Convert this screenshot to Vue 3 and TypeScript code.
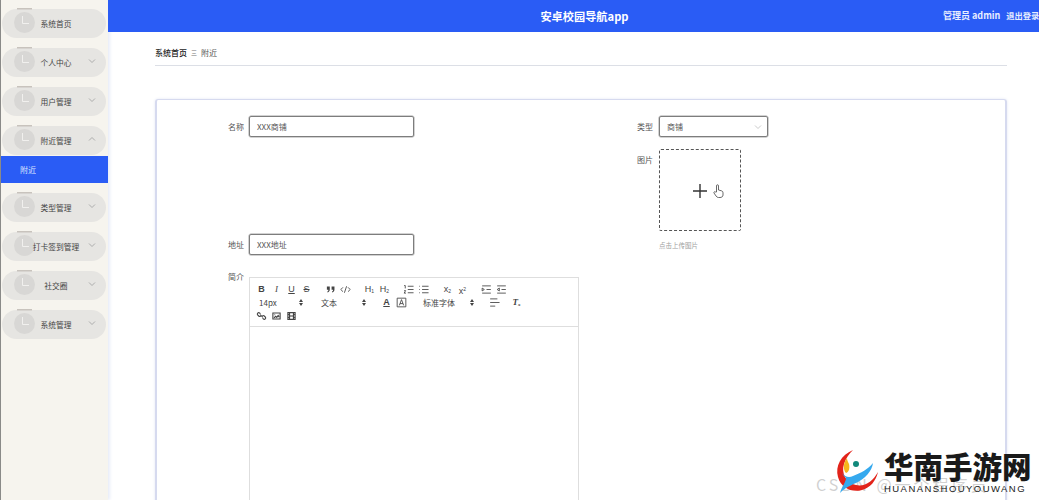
<script setup lang="ts">
interface MenuItem {
  name: string;
  arrow?: "up" | "down";
  children?: string[];
}

interface ToolItem {
  icon?: string;
  text?: string;
  sub?: string;
  kind?: string;
}

const menu: MenuItem[] = [
  { name: "系统首页" },
  { name: "个人中心", arrow: "down" },
  { name: "用户管理", arrow: "down" },
  { name: "附近管理", arrow: "up", children: ["附近"] },
  { name: "类型管理", arrow: "down" },
  { name: "打卡签到管理", arrow: "down" },
  { name: "社交圈", arrow: "down" },
  { name: "系统管理", arrow: "down" },
];

const icons: Record<string, string[]> = {
  quote: ["M4 5h4v4c0 2-1 3.500-3 4l-.5-1c1-.4 1.500-1 1.600-2.500H4z", "M10.500 5h4v4c0 2-1 3.500-3 4l-.5-1c1-.4 1.500-1 1.600-2.500h-2.100z"],
  code: ["M5.500 6 2.500 9l3 3", "M12.500 6l3 3-3 3", "M10.500 4.500l-3 9"],
  ol: ["M8 4.500h8", "M8 9h8", "M8 13.500h8", "M3 3.500h1.500v4", "M3 10.500h2L3 14h2.500"],
  ul: ["M7 4.500h9", "M7 9h9", "M7 13.500h9", "M3 4.500h1", "M3 9h1", "M3 13.500h1"],
  indent: ["M3 4h12", "M3 14h12", "M9 9h6", "M3 7l3 2-3 2z"],
  outdent: ["M3 4h12", "M3 14h12", "M9 9h6", "M6 7 3 9l3 2z"],
  background: ["M3 3h12v12H3z", "M6 13l3-8 3 8", "M7 10.500h4"],
  align: ["M3 4h10", "M3 9h13", "M3 14h7"],
  link: ["M7 5 5.500 3.500a2.500 2.500 0 0 0-3.500 3.500L4 9a2.500 2.500 0 0 0 3.500 0", "M11 13l1.500 1.500a2.500 2.500 0 0 0 3.500-3.500L14 9a2.500 2.500 0 0 0-3.500 0", "M6.500 6.500l5 5"],
  image: ["M2.500 3.500h13v11h-13z", "M4.500 12.500l3-3 2 2 2.500-3.500 2 3", "M5.500 6.500h1"],
  video: ["M2.500 3h13v12h-13z", "M5.500 3v12", "M12.500 3v12", "M5.500 9h7", "M2.500 6.500h3", "M2.500 11.500h3", "M12.500 6.500h3", "M12.500 11.500h3"],
};

const firstRow: ToolItem[][] = [
  [
    { text: "B", kind: "bold" },
    { text: "I", kind: "italic" },
    { text: "U", kind: "under" },
    { text: "S", kind: "strike" },
  ],
  [{ icon: "quote" }, { icon: "code" }],
  [
    { text: "H", sub: "1", kind: "head" },
    { text: "H", sub: "2", kind: "head" },
  ],
  [{ icon: "ol" }, { icon: "ul" }],
  [
    { text: "x", sub: "2", kind: "script" },
    { text: "x", sub: "2", kind: "super" },
  ],
  [{ icon: "indent" }, { icon: "outdent" }],
];

const lastRow: ToolItem[] = [{ icon: "link" }, { icon: "image" }, { icon: "video" }];
</script>

<template>
  <div class="page">
    <aside class="side">
      <template v-for="item in menu" :key="item.name">
        <div class="pill">
          <svg class="clock" width="22" height="26" viewBox="0 0 22 26">
            <circle cx="10.500" cy="14.500" r="10.500" fill="#d8d7d5" />
            <rect x="3" y="0" width="15" height="1.500" fill="#c8c3bd" />
            <path d="M8.500 8v7.500H15" fill="none" stroke="#f1f0ee" stroke-width="1" />
          </svg>
          <span class="pill-name">{{ item.name }}</span>
          <svg v-if="item.arrow" class="arrow" width="8" height="6" viewBox="0 0 8 6">
            <path :d="item.arrow === 'down' ? 'M1 1.500l3 3 3-3' : 'M1 4.500l3-3 3 3'" fill="none" stroke="#a5a5a5" stroke-width="0.900" />
          </svg>
        </div>
        <div v-for="child in item.children" :key="child" class="child">{{ child }}</div>
      </template>
    </aside>

    <div class="right">
      <header class="top">
        <h1>安卓校园导航app</h1>
        <div class="user">
          <span>管理员 admin</span>
          <span class="logout">退出登录</span>
        </div>
      </header>

      <main class="main">
        <nav class="crumb">
          <b>系统首页</b>
          <i>三</i>
          <span>附近</span>
        </nav>

        <section class="card">
          <div class="form-left">
            <div class="row name-row">
              <label>名称</label>
              <div class="input">XXX商铺</div>
            </div>
            <div class="row addr-row">
              <label>地址</label>
              <div class="input">XXX地址</div>
            </div>
            <div class="row">
              <label class="intro">简介</label>
              <div class="editor">
                <div class="toolbar">
                  <div class="tool-row">
                    <div v-for="(group, g) in firstRow" :key="g" class="group">
                      <template v-for="(tool, t) in group" :key="t">
                        <span v-if="tool.text" class="btn text-btn" :class="tool.kind">{{ tool.text }}<small v-if="tool.sub">{{ tool.sub }}</small></span>
                        <svg v-else class="btn" :class="tool.icon" width="15" height="13" viewBox="0 0 18 18">
                          <path v-for="d in icons[tool.icon!]" :key="d" :d="d" />
                        </svg>
                      </template>
                    </div>
                  </div>
                  <div class="tool-row">
                    <div class="group">
                      <span class="picker size">14px</span>
                    </div>
                    <div class="group">
                      <span class="picker head-pick">文本</span>
                    </div>
                    <div class="group">
                      <span class="btn text-btn color">A</span>
                      <svg class="btn" width="15" height="13" viewBox="0 0 18 18">
                        <path v-for="d in icons.background" :key="d" :d="d" />
                      </svg>
                    </div>
                    <div class="group">
                      <span class="picker family">标准字体</span>
                    </div>
                    <div class="group tight">
                      <svg class="btn" width="15" height="13" viewBox="0 0 18 18">
                        <path v-for="d in icons.align" :key="d" :d="d" />
                      </svg>
                      <span class="btn text-btn clean">T<small>x</small></span>
                    </div>
                  </div>
                  <div class="tool-row">
                    <div class="group">
                      <svg v-for="tool in lastRow" :key="tool.icon" class="btn heavy" width="15" height="10" viewBox="0 0 18 18">
                        <path v-for="d in icons[tool.icon!]" :key="d" :d="d" />
                      </svg>
                    </div>
                  </div>
                </div>
              </div>
            </div>
          </div>

          <div class="form-right">
            <div class="row">
              <label>类型</label>
              <div class="input select">
                商铺
                <svg width="8" height="6" viewBox="0 0 8 6">
                  <path d="M1 1.500l3 3 3-3" fill="none" stroke="#c4c4c4" stroke-width="0.900" />
                </svg>
              </div>
            </div>
            <div class="row pic-row">
              <label>图片</label>
              <div>
                <div class="upload">
                  <svg class="plus" width="14" height="14" viewBox="0 0 14 14">
                    <path d="M7 0v14M0 7h14" stroke="#333" stroke-width="1.400" />
                  </svg>
                  <svg class="hand" width="11" height="14" viewBox="0 0 11 14">
                    <path d="M3.500 8V1.800a1 1 0 0 1 2 0V6l3 .8c1 .3 1.500 1 1.500 2V11c0 1.500-1.200 2.500-3 2.500H5.500c-1 0-1.800-.5-2.400-1.400L1 9c-.5-1 .8-1.800 1.500-1z" fill="#fff" stroke="#444" stroke-width="0.800" />
                  </svg>
                </div>
                <p class="hint">点击上传图片</p>
              </div>
            </div>
          </div>
        </section>
      </main>
    </div>

    <div class="brand">
      <span class="csdn">CSDN @一个程序员</span>
      <svg class="logo" width="46" height="52" viewBox="0 0 46 52">
        <path d="M18 4C6 9 0 20 3 31c3 11 14 16 24 13 8-2 14-9 16-18-5 9-13 15-22 13C11 37 6 27 9 18c2-6 5-10 9-14z" fill="#e2231a" />
        <path d="M12 12c-4 5-4 12-1 15 3-1 4-5 3-9-1-2-2-4-2-6z" fill="#f5b51c" />
        <circle cx="21" cy="18" r="3" fill="#11897b" />
        <path d="M7 27c3 4 7 5 11 3 8-3 15-7 20-13-1 8-8 16-17 20-7 3-11 5-16 10 2-7 6-11 6-15-1-1-3-3-4-5z" fill="#35a9ee" />
      </svg>
      <div class="brand-text">
        <strong>华南手游网</strong>
        <span>HUANANSHOUYOUWANG</span>
      </div>
    </div>
  </div>
</template>

<style>
html,
body {
  margin: 0;
  overflow: hidden;
  background: #fff;
}
</style>

<style scoped>
.page {
  position: relative;
  display: flex;
  width: 1039px;
  height: 500px;
  overflow: hidden;
  font-family: "Noto Sans CJK SC", "Liberation Sans", sans-serif;
  color: #555;
}

.side {
  flex: 0 0 108px;
  box-sizing: border-box;
  padding-top: 9px;
  border-left: 1px solid #8a8a88;
  background: #f6f4ee;
  box-shadow: 2px 0 3px #e8ecf8;
}

.pill {
  position: relative;
  width: 104px;
  height: 29px;
  margin: 0 0 10px 1px;
  border-radius: 15px;
  background: #e6e5e2;
}

.clock {
  position: absolute;
  top: -1px;
  left: 12px;
}

.pill-name {
  position: relative;
  display: block;
  width: 108px;
  font-size: 7.750px;
  line-height: 29px;
  text-align: center;
  color: #444;
  white-space: nowrap;
}

.arrow {
  position: absolute;
  top: 10px;
  right: 10px;
}

.child {
  height: 27px;
  margin: -9px 0 10px;
  padding-left: 19px;
  font-size: 8px;
  line-height: 27px;
  color: #dfe6ff;
  background: #2a5cf5;
}

.right {
  flex: 1;
  display: flex;
  flex-direction: column;
  min-width: 0;
}

.top {
  position: relative;
  flex: 0 0 32px;
  display: flex;
  justify-content: center;
  align-items: center;
  background: #2a5cf5;
  color: #fff;
}

.top h1 {
  margin: 0 0 0 22px;
  font-size: 11.200px;
  font-weight: 700;
}

.user {
  position: absolute;
  top: 0;
  left: 835px;
  display: flex;
  gap: 6px;
  font-size: 9px;
  font-weight: 700;
  line-height: 31px;
  white-space: nowrap;
  color: #e8eeff;
}

.logout {
  font-size: 8.250px;
}

.main {
  flex: 1;
  padding: 0 32px 0 47px;
}

.crumb {
  display: flex;
  align-items: center;
  gap: 4px;
  height: 25px;
  padding-top: 8px;
  border-bottom: 1px solid #dcdfe6;
  font-size: 8px;
  color: #555;
}

.crumb b {
  font-weight: 500;
  color: #222;
}

.crumb i {
  font-size: 6px;
  font-style: normal;
  color: #777;
}

.card {
  display: flex;
  height: 480px;
  margin-top: 33px;
  padding-top: 16px;
  box-sizing: border-box;
  border: solid #d6daef;
  border-width: 1px 2px 0;
  border-radius: 3px;
  box-shadow: 0 0 3px #e3e6f3;
}

.form-left {
  flex: 0 0 409px;
  min-width: 0;
}

.form-right {
  flex: 1;
}

.row {
  display: flex;
  align-items: flex-start;
}

.row label {
  flex: 0 0 87px;
  font-size: 8px;
  line-height: 21px;
  text-align: right;
  color: #555;
}

.row label.intro {
  margin-top: -5px;
  line-height: 10px;
}

.name-row {
  margin-bottom: 97px;
}

.addr-row {
  margin-bottom: 22px;
}

.row .input,
.row .editor {
  margin-left: 5px;
}

.form-right .row label + * {
  margin-left: 6px;
}

.input {
  flex: none;
  box-sizing: border-box;
  width: 165px;
  height: 21px;
  padding-left: 7px;
  border: 1px solid #7d7d7d;
  border-radius: 2px;
  font-size: 8px;
  line-height: 19px;
  color: #555;
  box-shadow: 0 0 0 0.500px #a5a5a5;
}

.select {
  position: relative;
  width: 109px;
}

.select svg {
  position: absolute;
  top: 7px;
  right: 5px;
}

.pic-row {
  margin-top: 12px;
}

.pic-row label {
  line-height: 22px;
}

.upload {
  display: flex;
  align-items: center;
  box-sizing: border-box;
  position: relative;
  width: 82px;
  height: 82px;
  border: 1px dashed #555;
  border-radius: 2px;
}

.plus {
  position: absolute;
  top: 34px;
  left: 33px;
}

.hand {
  position: absolute;
  top: 34px;
  left: 53px;
}

.hint {
  margin: 9px 0 0;
  font-size: 6.500px;
  line-height: 10px;
  color: #a0a0a0;
}

.editor {
  flex: none;
  box-sizing: border-box;
  width: 330px;
  height: 300px;
  border: 1px solid #dedede;
}

.toolbar {
  box-sizing: border-box;
  height: 49px;
  padding: 5px 0 0 4px;
  border-bottom: 1px solid #dedede;
}

.tool-row {
  display: flex;
  gap: 9px;
  height: 13px;
}

.group {
  display: flex;
  height: 13px;
}

.group.tight {
  gap: 7px;
}

.btn {
  flex: 0 0 15px;
  width: 15px;
  height: 13px;
}

svg.btn path {
  fill: none;
  stroke: #444;
  stroke-width: 1.200;
}

svg.quote path {
  fill: #444;
  stroke: none;
}

svg.heavy {
  height: 10px;
  margin-top: 2px;
}

svg.heavy path {
  stroke-width: 2;
}

.text-btn {
  display: block;
  font-family: "Liberation Sans", sans-serif;
  font-size: 9px;
  line-height: 13px;
  text-align: center;
  white-space: nowrap;
  color: #444;
}

.text-btn small {
  font-size: 5px;
  vertical-align: -1px;
}

.bold {
  font-weight: 700;
}

.italic {
  font-style: italic;
  font-family: "Liberation Serif", serif;
}

.under {
  text-decoration: underline;
}

.strike {
  text-decoration: line-through;
}

.super small {
  vertical-align: 3px;
}

.color {
  font-weight: 700;
  text-decoration: underline;
}

.clean {
  font-family: "Liberation Serif", serif;
  font-style: italic;
  font-weight: 700;
}

.picker {
  position: relative;
  display: block;
  box-sizing: border-box;
  padding-left: 5px;
  font-size: 8px;
  line-height: 13px;
  color: #444;
}

.picker::before,
.picker::after {
  content: "";
  position: absolute;
  right: 4px;
  border-left: 2px solid transparent;
  border-right: 2px solid transparent;
}

.picker::before {
  top: 3px;
  border-bottom: 3px solid #444;
}

.picker::after {
  top: 7px;
  border-top: 3px solid #444;
}

.size {
  width: 53px;
}

.head-pick {
  width: 54px;
}

.family {
  width: 60px;
}

.brand {
  position: absolute;
  left: 816px;
  top: 446px;
  display: flex;
  width: 223px;
  height: 54px;
}

.csdn {
  position: absolute;
  left: 0;
  top: 26px;
  font-size: 16px;
  letter-spacing: 3px;
  white-space: nowrap;
  color: #000;
  opacity: 0.18;
}

.logo {
  position: relative;
  margin-left: 19px;
}

.brand-text {
  position: relative;
  display: flex;
  flex-direction: column;
  margin-left: 3px;
  color: #1a1a1a;
}

.brand-text strong {
  font-size: 29.500px;
  font-weight: 900;
  line-height: 38px;
  white-space: nowrap;
}

.brand-text span {
  font-family: "Liberation Sans", sans-serif;
  font-size: 9.500px;
  letter-spacing: 1.450px;
  line-height: 10px;
  white-space: nowrap;
}
</style>
